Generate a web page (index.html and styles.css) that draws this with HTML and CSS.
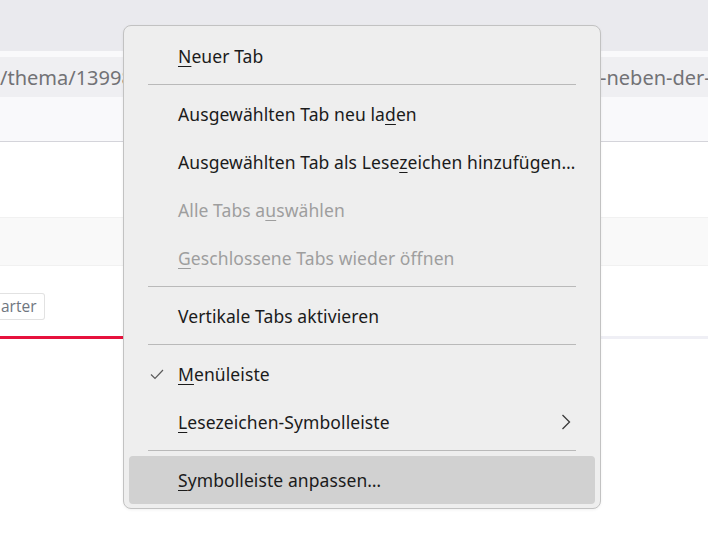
FILE: index.html
```html
<!DOCTYPE html>
<html lang="de">
<head>
<meta charset="utf-8">
<title>Tab-Kontextmenü</title>
<link rel="stylesheet" href="styles.css">
</head>
<body>
<div class="page">
  <div class="tabstrip"></div>
  <div class="navbar">
    <div class="urlbar">
      <span class="url-left">/thema/13998</span>
      <span class="url-right">-neben-der-</span>
    </div>
  </div>
  <div class="content">
    <div class="spacer-top"></div>
    <div class="band"></div>
    <div class="filters">
      <span class="chip">arter</span>
    </div>
    <div class="tabrow"><div class="tab-active"></div></div>
  </div>

  <div class="menu">
    <div class="item"><span class="label"><u>N</u>euer Tab</span></div>
    <div class="sep"></div>
    <div class="item"><span class="label">Ausgewählten Tab neu la<u>d</u>en</span></div>
    <div class="item"><span class="label">Ausgewählten Tab als Lese<u>z</u>eichen hinzufügen…</span></div>
    <div class="item disabled"><span class="label">Alle Tabs a<u>u</u>swählen</span></div>
    <div class="item disabled"><span class="label"><u>G</u>eschlossene Tabs wieder öffnen</span></div>
    <div class="sep"></div>
    <div class="item"><span class="label">Vertikale Tabs aktivieren</span></div>
    <div class="sep"></div>
    <div class="item checked">
      <svg class="check" width="14" height="11" viewBox="0 0 14 11"><polyline points="1,5.5 5,9.5 13,1" fill="none" stroke="#5a5a5a" stroke-width="1.2"/></svg>
      <span class="label"><u>M</u>enüleiste</span>
    </div>
    <div class="item">
      <span class="label"><u>L</u>esezeichen-Symbolleiste</span>
      <svg class="chev" width="10" height="16" viewBox="0 0 10 16"><polyline points="1.5,1 8.5,8 1.5,15" fill="none" stroke="#3a3a3a" stroke-width="1.3"/></svg>
    </div>
    <div class="sep"></div>
    <div class="item hover"><span class="label"><u>S</u>ymbolleiste anpassen…</span></div>
  </div>
</div>
</body>
</html>
```

FILE: styles.css
```css
html, body {
  margin: 0;
  padding: 0;
  background: #ffffff;
}
.page {
  position: relative;
  width: 708px;
  height: 550px;
  overflow: hidden;
  font-family: "Noto Sans", "Open Sans", sans-serif;
}
.tabstrip {
  height: 51px;
  background: #eaeaee;
}
.navbar {
  background: #f9f9fb;
  border-bottom: 1px solid #d4d4da;
  padding-top: 6px;
  box-sizing: border-box;
  height: 91px;
}
.urlbar {
  height: 40px;
  background: #efeff2;
  display: flex;
  align-items: center;
  white-space: nowrap;
  overflow: hidden;
  font-size: 20px;
  color: #727276;
}
.url-left {
  flex: 0 0 auto;
  width: 123px;
}
.url-right {
  flex: 0 0 auto;
  margin-left: 477px;
}
.content {
  display: flex;
  flex-direction: column;
}
.spacer-top {
  height: 75px;
}
.band {
  height: 47px;
  background: #f9f9f9;
  border-top: 1px solid #f1f1f1;
  border-bottom: 1px solid #f1f1f1;
}
.filters {
  height: 70px;
  display: flex;
  align-items: flex-start;
  padding-top: 27px;
  box-sizing: border-box;
}
.chip {
  display: inline-block;
  height: 27px;
  line-height: 25px;
  box-sizing: border-box;
  padding: 0 7px 0 1px;
  border: 1px solid #e2e2e2;
  border-left: none;
  border-radius: 0 3px 3px 0;
  font-family: "Open Sans", "Noto Sans", sans-serif;
  font-size: 15.5px;
  color: #6f7680;
}
.tabrow {
  height: 3px;
  background: #efeff5;
}
.tab-active {
  width: 320px;
  height: 3px;
  background: #e6123d;
}

/* context menu */
.menu {
  position: absolute;
  left: 123px;
  top: 25px;
  width: 478px;
  box-sizing: border-box;
  background: #eeeeee;
  border: 1px solid #c2c2c2;
  border-radius: 8px;
  padding: 6px 5px 4px;
  box-shadow: 0 1px 3px rgba(0,0,0,0.06);
  display: flex;
  flex-direction: column;
}
.item {
  height: 48px;
  display: flex;
  align-items: center;
  padding: 0 24px 0 49px;
  position: relative;
  font-size: 17.5px;
  letter-spacing: 0.09px;
  color: #1b1b1b;
  border-radius: 4px;
  white-space: nowrap;
}
.item u {
  text-decoration-thickness: 1px;
  text-underline-offset: 3px;
}
.item .label {
  flex: 1 1 auto;
}
.item.disabled {
  color: #9e9e9e;
}
.item.hover {
  background: #d1d1d1;
}
.check {
  position: absolute;
  left: 21px;
  top: 19px;
}
.chev {
  flex: 0 0 auto;
}
.sep {
  height: 1px;
  background: #b9b9b9;
  margin: 4px 19px 5px;
}
```
